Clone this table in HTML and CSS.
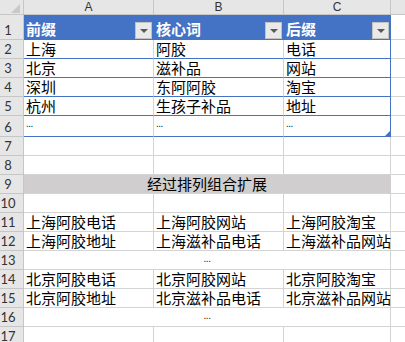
FILE: index.html
```html
<!DOCTYPE html>
<html lang="zh-CN">
<head>
<meta charset="utf-8">
<link rel="stylesheet" href="styles.css">
</head>
<body>
<div class="sheet">
  <div class="corner"><span class="corner-tri"></span></div>
  <div class="colhead">A</div>
  <div class="colhead">B</div>
  <div class="colhead">C</div>
  <div class="colhead"></div>

  <div class="rowhead">1</div>
  <div class="th"><span>前缀</span><span class="dd"><span class="dd-tri"></span></span></div>
  <div class="th"><span>核心词</span><span class="dd"><span class="dd-tri"></span></span></div>
  <div class="th th-last"><span>后缀</span><span class="dd"><span class="dd-tri"></span></span></div>
  <div class="cell"></div>

  <div class="rowhead">2</div>
  <div class="td">上海</div>
  <div class="td">阿胶</div>
  <div class="td td-last">电话</div>
  <div class="cell"></div>

  <div class="rowhead">3</div>
  <div class="td">北京</div>
  <div class="td">滋补品</div>
  <div class="td td-last">网站</div>
  <div class="cell"></div>

  <div class="rowhead">4</div>
  <div class="td">深圳</div>
  <div class="td">东阿阿胶</div>
  <div class="td td-last">淘宝</div>
  <div class="cell"></div>

  <div class="rowhead">5</div>
  <div class="td">杭州</div>
  <div class="td">生孩子补品</div>
  <div class="td td-last">地址</div>
  <div class="cell"></div>

  <div class="rowhead">6</div>
  <div class="td"><span class="dots dots-t">...</span></div>
  <div class="td"><span class="dots dots-t">...</span></div>
  <div class="td td-last td-corner"><span class="dots dots-t">...</span><span class="resize"></span></div>
  <div class="cell"></div>

  <div class="rowhead">7</div>
  <div class="cell"></div><div class="cell"></div><div class="cell"></div><div class="cell"></div>

  <div class="rowhead">8</div>
  <div class="cell"></div><div class="cell"></div><div class="cell"></div><div class="cell"></div>

  <div class="rowhead">9</div>
  <div class="band">经过排列组合扩展</div>
  <div class="cell"></div>

  <div class="rowhead">10</div>
  <div class="cell"></div><div class="cell"></div><div class="cell"></div><div class="cell"></div>

  <div class="rowhead">11</div>
  <div class="cell">上海阿胶电话</div>
  <div class="cell">上海阿胶网站</div>
  <div class="cell">上海阿胶淘宝</div>
  <div class="cell"></div>

  <div class="rowhead">12</div>
  <div class="cell">上海阿胶地址</div>
  <div class="cell">上海滋补品电话</div>
  <div class="cell">上海滋补品网站</div>
  <div class="cell"></div>

  <div class="rowhead">13</div>
  <div class="merged"><span class="dots dots-m">...</span></div>
  <div class="cell"></div>

  <div class="rowhead">14</div>
  <div class="cell">北京阿胶电话</div>
  <div class="cell">北京阿胶网站</div>
  <div class="cell">北京阿胶淘宝</div>
  <div class="cell"></div>

  <div class="rowhead">15</div>
  <div class="cell">北京阿胶地址</div>
  <div class="cell">北京滋补品电话</div>
  <div class="cell">北京滋补品网站</div>
  <div class="cell"></div>

  <div class="rowhead">16</div>
  <div class="merged"><span class="dots dots-m">...</span></div>
  <div class="cell"></div>

  <div class="rowhead">17</div>
  <div class="cell"></div><div class="cell"></div><div class="cell"></div><div class="cell"></div>
</div>
</body>
</html>
```

FILE: styles.css
```css
html, body {
  margin: 0;
  padding: 0;
  background: #ffffff;
  overflow: hidden;
}

.sheet {
  display: grid;
  grid-template-columns: 24px 130px 130px 107px 40px;
  grid-template-rows: 15px 25px repeat(4, 19px) 21px repeat(11, 19px);
  width: 431px;
  font-family: "Noto Sans CJK SC", "Noto Sans", sans-serif;
  font-size: 15px;
  color: #000000;
}

.sheet > div {
  box-sizing: border-box;
  white-space: nowrap;
  min-width: 0;
}

.corner {
  background: #e6e6e6;
  border-right: 1px solid #c6c6c6;
  border-bottom: 1px solid #c6c6c6;
  display: flex;
  justify-content: flex-end;
  align-items: flex-end;
  padding: 0 3px 1px 0;
}

.corner-tri {
  width: 0;
  height: 0;
  border-left: 9px solid transparent;
  border-bottom: 9px solid #c8c8c8;
}

.colhead {
  background: #e6e6e6;
  border-right: 1px solid #c6c6c6;
  border-bottom: 1px solid #c6c6c6;
  font-family: "Liberation Sans", Arial, sans-serif;
  font-size: 12px;
  color: #333333;
  display: flex;
  align-items: center;
  justify-content: center;
  line-height: 14px;
}

.rowhead {
  background: #e6e6e6;
  border-right: 1px solid #c6c6c6;
  border-bottom: 1px solid #c6c6c6;
  font-family: Lato, "Liberation Sans", sans-serif;
  font-size: 13px;
  color: #333333;
  display: flex;
  align-items: flex-end;
  justify-content: center;
  padding: 0 7px 1px 0;
  line-height: 15px;
}

.cell {
  border-right: 1px solid #d4d4d4;
  border-bottom: 1px solid #d4d4d4;
  display: flex;
  align-items: flex-end;
  padding: 0 0 0 2px;
  line-height: 18px;
  overflow: visible;
}

.th {
  background: #4472c4;
  color: #ffffff;
  font-weight: bold;
  border-right: 1px solid #4472c4;
  display: flex;
  justify-content: space-between;
  align-items: flex-end;
  padding: 0 1px 1px 2px;
  line-height: 20px;
}

.th-last {
  border-right: 1px solid #4472c4;
}

.dd {
  width: 17px;
  height: 17px;
  box-sizing: border-box;
  background: #e9e9e9;
  border: 1px solid #c2c2c2;
  display: flex;
  align-items: center;
  justify-content: center;
}

.dd-tri {
  width: 0;
  height: 0;
  border-left: 4px solid transparent;
  border-right: 4px solid transparent;
  border-top: 4px solid #595959;
  margin-top: 1px;
}

.td {
  border-right: 1px solid #d4d4d4;
  border-bottom: 1px solid #4472c4;
  display: flex;
  align-items: flex-end;
  padding: 0 0 0 2px;
  line-height: 18px;
}

.td-last {
  border-right: 1px solid #4472c4;
}

.td-corner {
  justify-content: space-between;
}

.resize {
  align-self: flex-end;
  width: 0;
  height: 0;
  border-left: 5px solid transparent;
  border-bottom: 5px solid #4472c4;
}

.dots {
  font-family: "Liberation Sans", Arial, sans-serif;
  font-size: 10px;
  line-height: 14px;
  letter-spacing: -0.5px;
  color: #222222;
}

.dots-t {
  margin-bottom: 5px;
}

.dots-m {
  margin-bottom: 3px;
}

.band {
  grid-column: span 3;
  background: #d0cece;
  border-right: 1px solid #d0cece;
  border-bottom: 1px solid #d4d4d4;
  display: flex;
  align-items: flex-end;
  justify-content: center;
  line-height: 18px;
}

.merged {
  grid-column: span 3;
  border-right: 1px solid #d4d4d4;
  border-bottom: 1px solid #d4d4d4;
  display: flex;
  align-items: flex-end;
  justify-content: center;
  line-height: 18px;
}
```
